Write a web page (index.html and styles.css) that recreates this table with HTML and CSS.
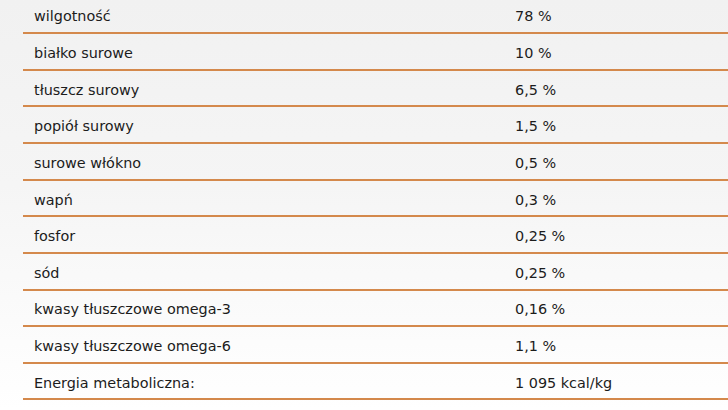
FILE: index.html
```html
<!DOCTYPE html>
<html lang="pl">
<head>
<meta charset="utf-8">
<link rel="stylesheet" href="styles.css">
</head>
<body>
<table class="nutri">
  <tbody>
    <tr><td class="name">wilgotność</td><td class="val">78 %</td></tr>
    <tr><td class="name">białko surowe</td><td class="val">10 %</td></tr>
    <tr><td class="name">tłuszcz surowy</td><td class="val">6,5 %</td></tr>
    <tr><td class="name">popiół surowy</td><td class="val">1,5 %</td></tr>
    <tr><td class="name">surowe włókno</td><td class="val">0,5 %</td></tr>
    <tr><td class="name">wapń</td><td class="val">0,3 %</td></tr>
    <tr><td class="name">fosfor</td><td class="val">0,25 %</td></tr>
    <tr><td class="name">sód</td><td class="val">0,25 %</td></tr>
    <tr><td class="name">kwasy tłuszczowe omega-3</td><td class="val">0,16 %</td></tr>
    <tr><td class="name">kwasy tłuszczowe omega-6</td><td class="val">1,1 %</td></tr>
    <tr><td class="name">Energia metaboliczna:</td><td class="val">1 095 kcal/kg</td></tr>
  </tbody>
</table>
</body>
</html>
```

FILE: styles.css
```css
html, body {
  margin: 0;
  padding: 0;
}
body {
  width: 728px;
  height: 410px;
  overflow: hidden;
  background: linear-gradient(to bottom, #f1f1f1 0%, #f5f5f5 45%, #ffffff 100%);
  font-family: "DejaVu Sans", Verdana, sans-serif;
  font-size: 14.4px;
  color: #1c1c1c;
}
.nutri {
  border-collapse: separate;
  border-spacing: 0;
  margin: -2.4px 0 0 23px;
  width: 705px;
}
.nutri td {
  box-sizing: content-box;
  padding: 10.8px 10px 6.83px 11px;
  height: 17px;
  line-height: 17px;
  border-bottom: 2px solid #d4894c;
  vertical-align: top;
  white-space: nowrap;
}
.nutri td.name {
  width: 460px;
}
```
